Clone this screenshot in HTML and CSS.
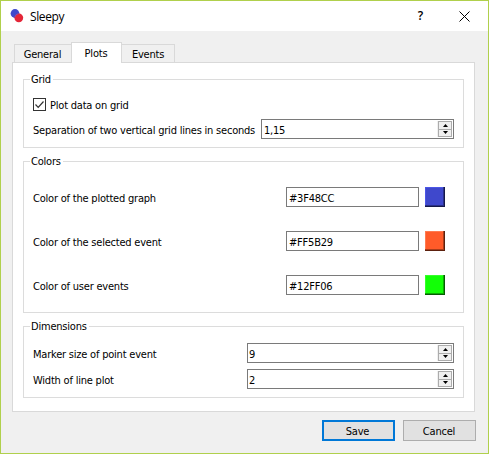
FILE: index.html
```
<!DOCTYPE html>
<html lang="en">
<head>
<meta charset="utf-8">
<title>Sleepy</title>
<link rel="stylesheet" href="styles.css">
</head>
<body>
<div class="window">
  <header class="titlebar">
    <svg class="logo" width="14" height="14" viewBox="0 0 14 14"><circle cx="5" cy="4.5" r="4.4" fill="#3f48cc"/><circle cx="8.8" cy="8.8" r="4.4" fill="#e42638"/><path d="M4.8 8.2A4.1 4.1 0 0 1 8.5 4.7" fill="none" stroke="#8050b0" stroke-width="1"/></svg>
    <span class="title">Sleepy</span>
    <span class="help">?</span>
    <svg class="close" width="11" height="11" viewBox="0 0 11 11"><path d="M.5.5l10 10M10.5.5l-10 10" stroke="#000" stroke-width="1"/></svg>
  </header>
  <nav class="tabs">
    <div class="tab general"><span>General</span></div>
    <div class="tab active"><span>Plots</span></div>
    <div class="tab events"><span>Events</span></div>
  </nav>
  <main class="pane">
    <fieldset class="grid-group">
      <legend>Grid</legend>
      <label class="check"><svg width="13" height="13" viewBox="0 0 13 13"><rect x=".5" y=".5" width="12" height="12" fill="#fff" stroke="#333"/><path d="M2.5 6.5l2.7 2.8 5.3-5.8" fill="none" stroke="#333" stroke-width="1.2"/></svg><span>Plot data on grid</span></label>
      <div class="row"><span>Separation of two vertical grid lines in seconds</span>
        <div class="field sep"><span>1,15</span><div class="steps"><i class="up"></i><i class="down"></i></div></div></div>
    </fieldset>
    <fieldset class="color-group">
      <legend>Colors</legend>
      <div class="row"><span>Color of the plotted graph</span><div class="field color"><span>#3F48CC</span></div><b class="swatch blue"></b></div>
      <div class="row"><span>Color of the selected event</span><div class="field color"><span>#FF5B29</span></div><b class="swatch orange"></b></div>
      <div class="row"><span>Color of user events</span><div class="field color"><span>#12FF06</span></div><b class="swatch green"></b></div>
    </fieldset>
    <fieldset class="dim-group">
      <legend>Dimensions</legend>
      <div class="row"><span>Marker size of point event</span><div class="field dim"><span>9</span><div class="steps"><i class="up"></i><i class="down"></i></div></div></div>
      <div class="row"><span>Width of line plot</span><div class="field dim"><span>2</span><div class="steps"><i class="up"></i><i class="down"></i></div></div></div>
    </fieldset>
  </main>
  <footer class="actions">
    <div class="button primary"><span>Save</span></div>
    <div class="button"><span>Cancel</span></div>
  </footer>
</div>
</body>
</html>
```
FILE: styles.css
```
* { box-sizing: border-box; }
body { margin: 0; font: 11px/15px "DejaVu Sans Condensed", "DejaVu Sans", sans-serif; font-stretch: condensed; letter-spacing: -.21px; color: #000; }
span, legend { white-space: nowrap; }
.window { width: 489px; height: 454px; background: #f0f0f0; border: 1px solid #b0d04c; overflow: hidden; }
.titlebar { height: 30px; background: #fff; display: flex; align-items: center; padding: 0 18px 0 9px; }
.logo { margin-right: 6px; }
.title { font: 12px/16px "Open Sans", sans-serif; letter-spacing: -.4px; margin-top: 1px; }
.help { font: 600 12px/16px "Open Sans", sans-serif; margin-left: auto; margin-right: 36px; }
.tabs { display: flex; align-items: flex-end; padding-left: 13px; height: 31px; }
.tab { height: 18px; border: 1px solid #d9d9d9; border-bottom: 0; display: flex; justify-content: center; padding-top: 2px; }
.general { width: 57px; border-right: 0; padding-right: 1px; }
.events { width: 53px; border-left: 0; }
.active { width: 51px; height: 21px; margin-bottom: -1px; background: #fff; position: relative; padding: 3px 1px 0 0; }
.pane { margin-left: 11px; width: 463px; height: 350px; background: #fff; border: 1px solid #d9d9d9; padding: 9px 10px 0; }
fieldset { margin: 0; border: 1px solid #dcdcdc; padding: 0 9px; min-width: 0; }
legend { padding: 0 2px 0 1px; margin-left: -3px; height: 15px; }
.grid-group { height: 76px; }
.color-group { height: 159px; margin-top: 6px; }
.dim-group { height: 79px; margin-top: 6px; }
.check { display: flex; align-items: center; gap: 4px; height: 13px; margin: 11px 0 8px; }
.check span { padding-top: 1px; }
.row { display: flex; align-items: center; height: 20px; }
.color-group .row { margin-bottom: 24px; }
.color-group .row:nth-of-type(1) { margin-top: 18px; }
.dim-group .row { margin-bottom: 6px; }
.dim-group .row:nth-of-type(1) { margin-top: 9px; }
.row > span { padding-top: 2px; }
.field { height: 20px; border: 1px solid #7a7a7a; background: #fff; margin-left: auto; display: flex; justify-content: space-between; padding: 3px 1px 0 2px; }
.sep { width: 193px; }
.dim { width: 207px; }
.dim > span { padding-left: 0; margin-left: -1px; }
.color { width: 133px; }
.steps { width: 15px; height: 16px; margin-top: -2px; padding-left: 1px; background: #f0f0f0; }
.steps i { display: block; width: 14px; height: 9px; border: 1px solid #acacac; background: #f0f0f0; padding: 2px 3px; }
.steps i + i { margin-top: -1px; height: 8px; }
.steps i::before { content: ""; display: block; width: 5px; height: 3px; margin-left: 1px; background: #000; }
.up::before { clip-path: polygon(50% 0, 100% 100%, 0 100%); }
.down::before { clip-path: polygon(0 0, 100% 0, 50% 100%); margin-top: -1px; }
.swatch { width: 20px; height: 20px; margin: 0 9px 0 6px; box-shadow: inset -1px -1px var(--outer), inset -2px -2px var(--inner), inset 1px 1px var(--light); }
.blue { background: #3f48cc; --outer: #15184a; --inner: #2a3088; --light: #4c56e6; }
.orange { background: #ff5b29; --outer: #5c200e; --inner: #aa3d1b; --light: #ff7b50; }
.green { background: #12ff06; --outer: #065c02; --inner: #0caa04; --light: #35ff2b; }
.actions { display: flex; justify-content: flex-end; gap: 8px; padding: 8px 12px 0 0; }
.button { width: 73px; height: 21px; border: 1px solid #adadad; background: #e1e1e1; display: flex; justify-content: center; align-items: center; padding: 1px 1px 0 0; }
.primary { border: 2px solid #0078d7; padding-right: 2px; }
```
